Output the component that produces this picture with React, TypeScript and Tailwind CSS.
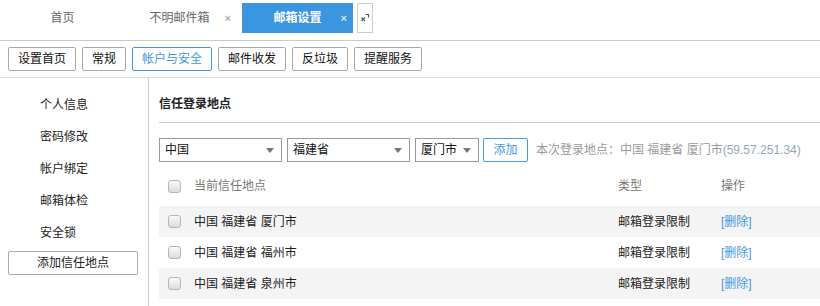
import React from 'react';

const font = { fontFamily: '"Liberation Sans", "Noto Sans CJK SC", sans-serif' };

const navButtons = ['设置首页', '常规', '帐户与安全', '邮件收发', '反垃圾', '提醒服务'];
const sideItems = ['个人信息', '密码修改', '帐户绑定', '邮箱体检', '安全锁'];
const rows = ['中国 福建省 厦门市', '中国 福建省 福州市', '中国 福建省 泉州市'];

function Checkbox() {
  return (
    <span className="inline-block w-[13px] h-[13px] rounded-[3px] border border-[#b5b5b5] bg-gradient-to-b from-[#fafafa] to-[#dcdcdc] shrink-0" />
  );
}

function Select({ label, width }: { label: string; width: string }) {
  return (
    <div className={`${width} h-[24px] border border-[#9a9a9a] bg-white flex items-center justify-between pl-[5px] pr-[7px] text-[12px] text-[#111]`}>
      <span>{label}</span>
      <svg width="8" height="5" viewBox="0 0 8 5">
        <path d="M0 0 H8 L4 5 Z" fill="#777" />
      </svg>
    </div>
  );
}

export default function App() {
  return (
    <div className="w-[820px] h-[306px] bg-white overflow-hidden text-[12px] text-[#333]" style={font}>
      {/* tabs */}
      <div className="h-[41px] border-b border-[#cccccc] flex items-start pt-[3px] pl-[7px] gap-[6px]">
        <div className="w-[111px] h-[30px] flex items-center justify-center text-[#666]">首页</div>
        <div className="w-[111px] h-[30px] flex items-center justify-center text-[#666] relative">
          <span>不明邮件箱</span>
          <span className="absolute right-[4px] top-[7px] text-[11px] font-bold text-[#b0b0b0]">×</span>
        </div>
        <div className="ml-[1px] w-[111px] h-[30px] flex items-center justify-center bg-[#3a97df] text-white font-bold relative">
          <span>邮箱设置</span>
          <span className="absolute right-[6px] top-[7px] text-[11px] font-bold text-[#cfe3f6]">×</span>
        </div>
        <div className="-ml-[2px] w-[16px] h-[30px] border border-[#cccccc] flex items-center justify-center">
          <svg width="10" height="10" viewBox="0 0 10 10" fill="none" stroke="#555" strokeWidth="1.2">
            <path d="M1.5 4.5 L5 8 M5 4.5 L1.5 8" />
            <path d="M5.5 1.5 H8.5 V4.5" />
          </svg>
        </div>
      </div>

      {/* settings nav */}
      <div className="h-[37px] border-b border-[#dddddd] flex items-center pl-[8px] gap-[6px]">
        {navButtons.map((b) => (
          <div
            key={b}
            className={`h-[24px] px-[9px] flex items-center rounded-[2px] border text-[12px] ${
              b === '帐户与安全'
                ? 'border-[#3f97e3] text-[#3f97e3]'
                : 'border-[#a9a9a9] text-[#111]'
            }`}
          >
            {b}
          </div>
        ))}
      </div>

      <div className="flex h-[228px]">
        {/* sidebar */}
        <div className="w-[149px] border-r border-[#cccccc] pt-[11px]">
          {sideItems.map((s) => (
            <div key={s} className="h-[32px] flex items-center pl-[40px] text-[#222]">
              {s}
            </div>
          ))}
          <div className="mt-[2px] ml-[8px] w-[130px] h-[24px] rounded-[2px] border border-[#aaaaaa] flex items-center justify-center text-[#222]">
            添加信任地点
          </div>
        </div>

        {/* content */}
        <div className="flex-1 pl-[10px]">
          <div className="h-[45px] border-b border-[#cccccc] pt-[18px] leading-[16px] font-bold text-[#222]">
            信任登录地点
          </div>

          <div className="mt-[15px] flex items-center gap-[5px]">
            <Select label="中国" width="w-[123px]" />
            <Select label="福建省" width="w-[123px]" />
            <Select label="厦门市" width="w-[64px]" />
            <div className="ml-[-1px] h-[24px] w-[45px] rounded-[2px] border border-[#4a9be6] text-[#3f97e3] flex items-center justify-center">
              添加
            </div>
            <div className="ml-[3px] text-[#9a9a9a]">
              本次登录地点：中国 福建省 厦门市<span className="text-[#95a8bb]">(59.57.251.34)</span>
            </div>
          </div>

          <div className="mt-[12px] h-[24px] flex items-center pl-[9px] text-[#777]">
            <Checkbox />
            <span className="ml-[13px] w-[424px]">当前信任地点</span>
            <span className="w-[103px]">类型</span>
            <span>操作</span>
          </div>

          <div className="mt-[8px]">
            {rows.map((r, i) => (
              <div
                key={r}
                className={`h-[31px] flex items-center pl-[9px] text-[#222] ${
                  i % 2 === 0 ? 'bg-[#f4f4f4]' : 'bg-white'
                }`}
              >
                <Checkbox />
                <span className="ml-[13px] w-[424px]">{r}</span>
                <span className="w-[103px]">邮箱登录限制</span>
                <span className="text-[#3f97e3]">[删除]</span>
              </div>
            ))}
          </div>
        </div>
      </div>
    </div>
  );
}
